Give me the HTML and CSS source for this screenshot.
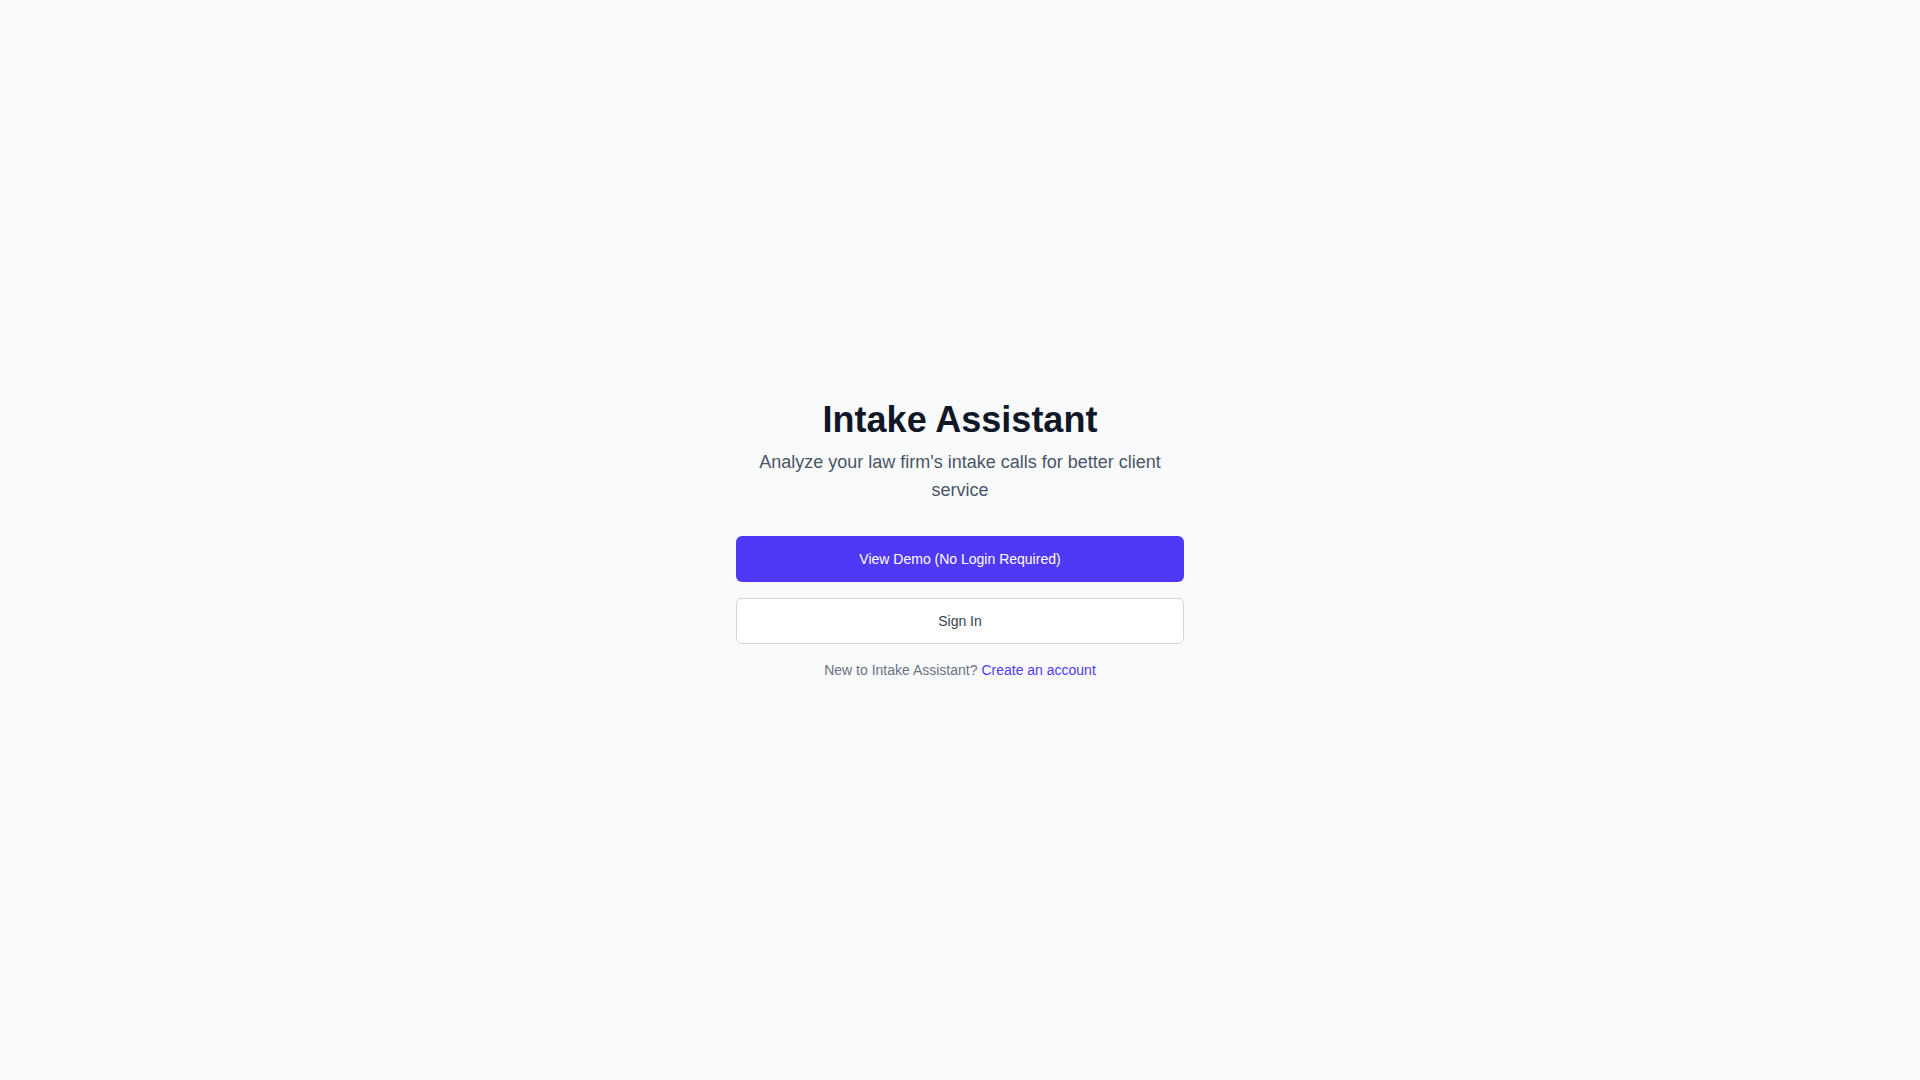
FILE: index.html
```html
<!DOCTYPE html>
<html lang="en">
<head>
<meta charset="utf-8">
<title>Intake Assistant</title>
<link rel="stylesheet" href="styles.css">
</head>
<body>
<main class="page">
  <div class="card">
    <h1 class="title">Intake Assistant</h1>
    <p class="subtitle">Analyze your law firm's intake calls for better client service</p>
    <div class="actions">
      <button class="btn btn-primary" type="button">View Demo (No Login Required)</button>
      <button class="btn btn-secondary" type="button">Sign In</button>
    </div>
    <p class="signup">New to Intake Assistant? <a class="link" href="#">Create an account</a></p>
  </div>
</main>
</body>
</html>
```
FILE: styles.css
```css
* { box-sizing: border-box; }
html, body { margin: 0; padding: 0; }
body {
  background: #f9fafb;
  font-family: "Liberation Sans", Arial, Helvetica, sans-serif;
  -webkit-font-smoothing: antialiased;
}
.page {
  min-height: 100vh;
  display: flex;
  align-items: center;
  justify-content: center;
}
.card {
  width: 448px;
  text-align: center;
}
.title {
  margin: 0;
  font-size: 36px;
  line-height: 40px;
  font-weight: 700;
  color: #101828;
}
.subtitle {
  margin: 8px 0 0;
  font-size: 18px;
  line-height: 28px;
  color: #4a5565;
}
.actions {
  margin-top: 32px;
  display: flex;
  flex-direction: column;
  gap: 16px;
}
.btn {
  display: block;
  width: 100%;
  padding: 12px 16px;
  font-family: inherit;
  font-size: 14px;
  line-height: 20px;
  font-weight: 400;
  border-radius: 6px;
  border: 1px solid transparent;
  cursor: pointer;
}
.btn-primary {
  background: #4f39f6;
  color: #ffffff;
}
.btn-secondary {
  background: #ffffff;
  color: #364153;
  border-color: #d1d5dc;
}
.signup {
  margin: 16px 0 0;
  font-size: 14px;
  line-height: 20px;
  color: #6a7282;
}
.link {
  color: #4f39f6;
  text-decoration: none;
}
```
